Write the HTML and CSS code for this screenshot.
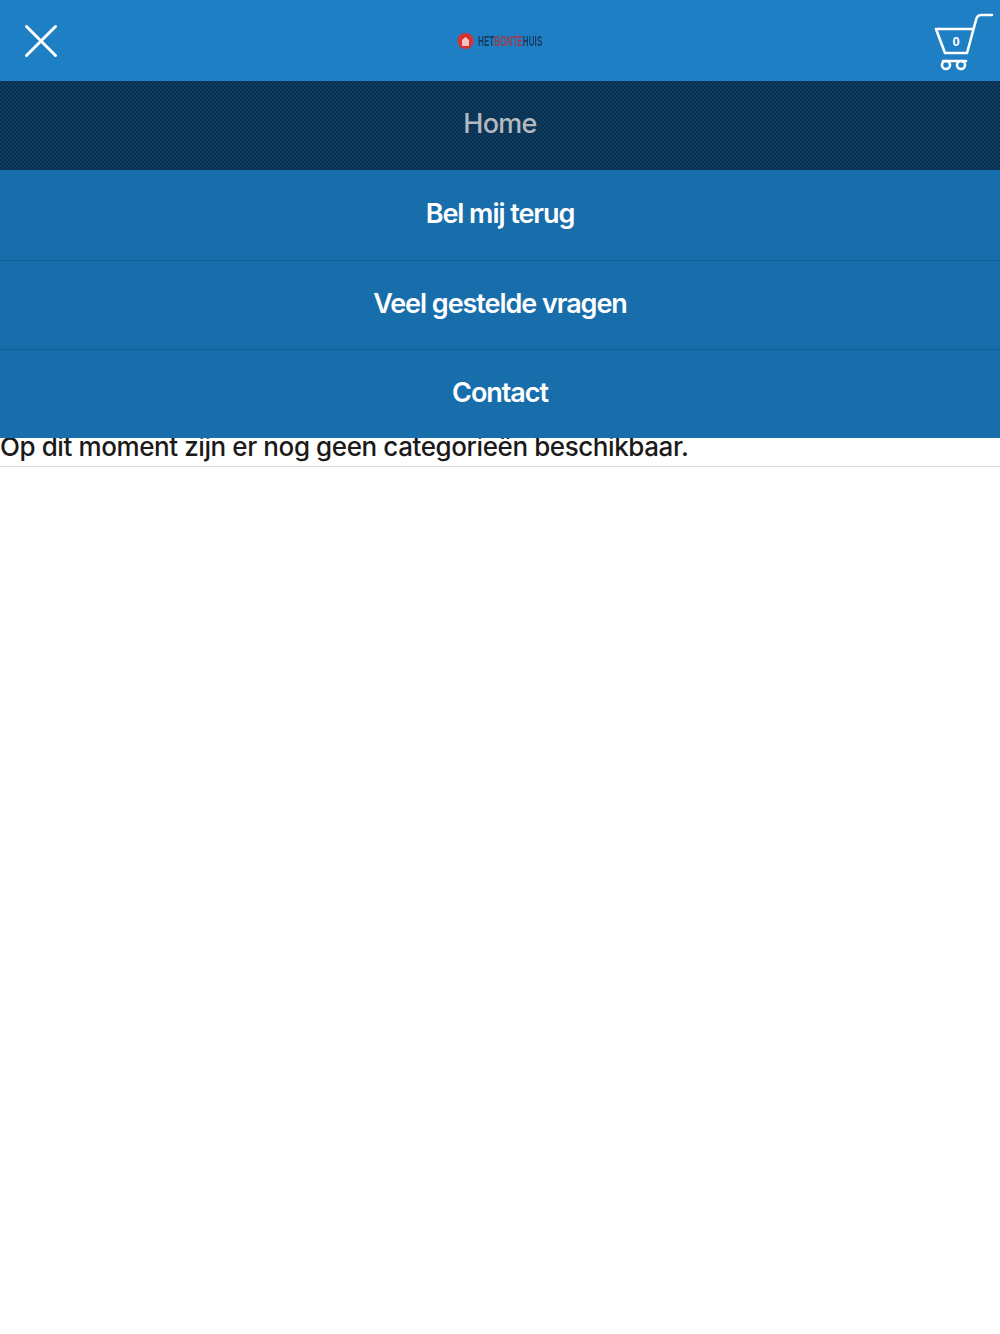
FILE: index.html
```html
<!DOCTYPE html>
<html lang="nl">
<head>
<meta charset="utf-8">
<title>Het Bonte Huis</title>
<link rel="stylesheet" href="styles.css">
</head>
<body>
<header class="topbar">
  <a class="close" href="#" aria-label="Sluiten">
    <svg width="34" height="34" viewBox="0 0 34 34"><path d="M2.5 2.5 L31.5 31.5 M31.5 2.5 L2.5 31.5" fill="none" stroke="#fff" stroke-width="3" stroke-linecap="round"/></svg>
  </a>
  <div class="logo">
    <svg class="logo-mark" width="17" height="18" viewBox="0 0 17 18"><circle cx="8.5" cy="9" r="8" fill="#d8322e"/><path d="M5 8 L8.5 5 L12 8 V14 H5 Z" fill="#f3c4c2"/></svg>
    <span class="logo-text">HET<span class="logo-red">BONTE</span>HUIS</span>
  </div>
  <a class="cart" href="#" aria-label="Winkelwagen">
    <svg width="60" height="60" viewBox="0 0 60 60">
      <g fill="none" stroke="#fff" stroke-width="2.6" stroke-linecap="round" stroke-linejoin="round">
        <path d="M2 18 H39 M2 18 L11 42 H33 L42 9 Q43 4 47 4 L58 4"/>
        <circle cx="12" cy="54" r="4"/>
        <circle cx="27" cy="54" r="4"/>
        <path d="M9 50 H32"/>
      </g>
    </svg>
    <span class="cart-count">0</span>
  </a>
</header>
<main class="content">
  <nav class="menu">
    <a class="menu-item menu-item-active" href="#">Home</a>
    <a class="menu-item" href="#">Bel mij terug</a>
    <a class="menu-item" href="#">Veel gestelde vragen</a>
    <a class="menu-item" href="#">Contact</a>
  </nav>
  <p class="notice">Op dit moment zijn er nog geen categorieën beschikbaar.</p>
</main>
</body>
</html>
```

FILE: styles.css
```css
* { box-sizing: border-box; }
html, body { margin: 0; padding: 0; background: #fff; }
body { font-family: "Inter", "Liberation Sans", sans-serif; width: 1000px; height: 1334px; overflow: hidden; }
a { text-decoration: none; color: inherit; }

.topbar {
  height: 81px;
  background: #1f7fc4;
  display: flex;
  align-items: center;
  justify-content: center;
  position: relative;
}
.close { position: absolute; left: 24px; top: 24px; width: 34px; height: 34px; display: block; }
.close svg { display: block; }

.logo { display: flex; align-items: center; gap: 4px; width: 86px; filter: blur(.4px); }
.logo-mark { display: block; flex: none; }
.logo-text {
  font-family: "Liberation Sans", sans-serif;
  font-size: 14px;
  font-weight: 700;
  color: #173a5e;
  display: inline-block;
  transform: scaleX(.57);
  transform-origin: left center;
  white-space: nowrap;
  letter-spacing: .2px;
}
.logo-red { color: #a03a48; }

.cart { position: absolute; left: 934px; top: 11px; width: 60px; height: 60px; display: block; }
.cart svg { display: block; }
.cart-count {
  position: absolute;
  left: 17px;
  top: 23px;
  width: 10px;
  text-align: center;
  font-family: "Liberation Sans", sans-serif;
  font-weight: 700;
  font-size: 13px;
  line-height: 16px;
  color: #fff;
}

.content { position: relative; }
.menu { position: absolute; top: 0; left: 0; right: 0; z-index: 2; display: flex; flex-direction: column; }
.menu-item {
  height: 89px;
  display: flex;
  align-items: center;
  justify-content: center;
  padding-bottom: 4px;
  background: #186dab;
  color: #fff;
  font-size: 27px;
  font-weight: 600;
  letter-spacing: -1.05px;
  border-top: 1px solid #155f96;
}
.menu-item-active {
  color: #b3b9be;
  font-weight: 500;
  letter-spacing: -.7px;
  border-top: 0;
  background-color: #0c3557;
  background-image: repeating-conic-gradient(#0a3050 0 25%, #0f3b60 0 50%);
  background-size: 4px 4px;
}
.menu-item:nth-child(2) { border-top: 0; height: 90px; }

.notice {
  margin: 0;
  padding-top: 350px;
  height: 386px;
  font-size: 26px;
  font-weight: 500;
  line-height: 32px;
  letter-spacing: -.41px;
  color: #1a1a1a;
  border-bottom: 1px solid #dcdcdc;
}
```
